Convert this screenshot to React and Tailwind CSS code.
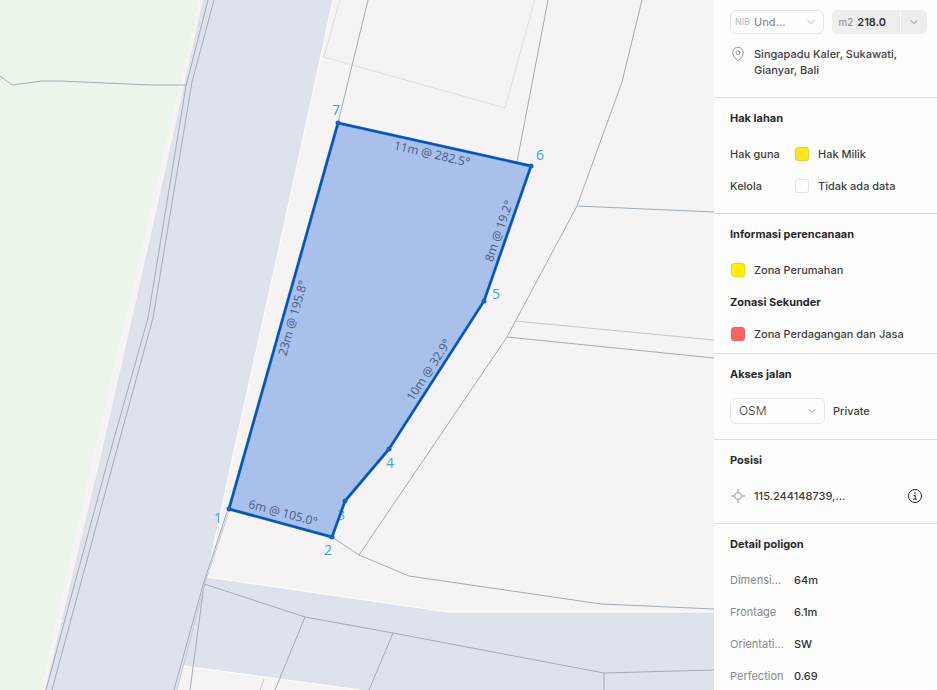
import { useState } from "react";
import { ChevronDown, MapPin } from "lucide-react";

const PARCEL = "229,509 332,537 345,501 389,449 484,301 531,166 338,123";

const VERTICES = [
  { n: 1, x: 229, y: 509, lx: 218, ly: 523 },
  { n: 2, x: 332, y: 537, lx: 328, ly: 555 },
  { n: 3, x: 345, y: 501, lx: 341, ly: 520 },
  { n: 4, x: 389, y: 449, lx: 390, ly: 468 },
  { n: 5, x: 484, y: 301, lx: 496, ly: 299 },
  { n: 6, x: 531, y: 166, lx: 540, ly: 160 },
  { n: 7, x: 338, y: 123, lx: 336, ly: 115 },
];

const EDGES = [
  { text: "11m @ 282.5°", x: 432, y: 154, angle: 13 },
  { text: "8m @ 19.2°", x: 499, y: 231, angle: -71 },
  { text: "10m @ 32.9°", x: 429, y: 370, angle: -57 },
  { text: "23m @ 195.8°", x: 293, y: 318, angle: -74 },
  { text: "6m @ 105.0°", x: 283, y: 513, angle: 15 },
];

const BOUNDARIES = [
  "208,0 186,86 148,318 108,460 46,690",
  "214,0 192,82 153,318 114,460 52,690",
  "0,76 12,85 42,81 60,81 150,85 186,85",
  "368,0 338,123",
  "548,0 517,162",
  "642,0 622,82 577,206 507,337 359,555",
  "577,206 714,212",
  "507,337 714,358",
  "332,537 359,555 409,576 601,604 714,609",
  "227,512 203,585 174,690",
  "204,585 190,690",
  "204,584 305,617 393,633 604,673 714,670",
  "305,617 275,690",
  "393,633 369,690",
  "604,673 604,690",
];

function ParcelMap() {
  return (
    <svg
      viewBox="0 0 714 690"
      preserveAspectRatio="xMidYMid slice"
      className="block h-full w-full bg-[#f5f3f4]"
      role="img"
      aria-label="Parcel map"
    >
      {/* field on the left */}
      <polygon points="0,0 199,0 146,230 92,460 41,690 0,690" fill="#ecf5ea" />

      {/* roads */}
      <polygon
        points="203,0 333,0 283,230 232,460 207,577 448,612 714,612 714,690 360,690 184,666 177,690 45,690 100,460 152,230"
        fill="#dee2eb"
      />
      <polyline points="333,0 283,230 232,460 207,577 448,612 714,612" fill="none" stroke="#fff" />
      <polyline points="177,690 184,666 360,690" fill="none" stroke="#fff" />

      {/* building */}
      <polygon points="340,-1 324,57 505,108 535,-1" fill="#f3f3f3" stroke="#d9d7cf" strokeWidth="0.8" />

      <g fill="none" stroke="#a3acb6" strokeWidth="1">
        {BOUNDARIES.map((points) => (
          <polyline key={points} points={points} />
        ))}
      </g>
      <g fill="none" stroke="#c2c9cf" strokeWidth="1">
        <polyline points="515,321 714,340" />
        <polyline points="228,514 205,583 177,690" />
        <polyline points="264,679 260,690" />
      </g>

      {/* selected parcel */}
      <polygon points={PARCEL} fill="#a8c0ea" />
      <g className="font-['Open_Sans',sans-serif] text-[14px]" fill="#3fa5d3" textAnchor="middle">
        {VERTICES.map((v) => (
          <text key={v.n} x={v.lx} y={v.ly}>
            {v.n}
          </text>
        ))}
      </g>
      <polygon points={PARCEL} fill="none" stroke="#2f86e0" strokeWidth="3" strokeLinejoin="round" />
      <polygon points={PARCEL} fill="none" stroke="#0b50ae" strokeWidth="2" strokeLinejoin="round" />
      {VERTICES.map((v) => (
        <circle key={v.n} cx={v.x} cy={v.y} r="2.5" fill="#1763bf" />
      ))}
      <g className="font-['Open_Sans',sans-serif] text-[12px]" fill="#475b84" textAnchor="middle">
        {EDGES.map((e) => (
          <text key={e.text} transform={`translate(${e.x} ${e.y}) rotate(${e.angle})`} dy="4">
            {e.text}
          </text>
        ))}
      </g>
    </svg>
  );
}

function Section({ title, className = "", children }) {
  return (
    <section className={`border-b border-[#dfdfe2] px-4 pt-3 ${className}`}>
      <h2 className="mb-4 font-bold text-[#2a2a2a]">{title}</h2>
      {children}
    </section>
  );
}

function Swatch({ color }) {
  return (
    <span className="flex w-4 shrink-0 justify-center">
      <span className={`size-3.5 rounded-[3px] border ${color}`} />
    </span>
  );
}

function LegendRow({ label, color, children }) {
  return (
    <div className="flex h-6 items-center">
      {label && <span className="w-16 shrink-0">{label}</span>}
      <Swatch color={color} />
      <span className="ml-2 whitespace-nowrap">{children}</span>
    </div>
  );
}

function LocateIcon() {
  return (
    <svg viewBox="0 0 16 16" className="size-4 shrink-0" fill="none" stroke="#999" strokeWidth="1">
      <circle cx="8" cy="8" r="3.5" />
      <path d="M8 1v3.5M8 11.5V15M1 8h3.5M11.5 8H15" />
    </svg>
  );
}

function InfoIcon() {
  return (
    <svg viewBox="0 0 16 16" className="size-4" fill="none" stroke="#222" strokeWidth="1">
      <circle cx="8" cy="8" r="6.5" />
      <path d="M6.6 7.5h1.6v3.5M6.3 11.2h3.6" />
      <circle cx="8" cy="5" r="0.8" fill="#222" stroke="none" />
    </svg>
  );
}

const DETAILS = [
  ["Dimensi...", "64m"],
  ["Frontage", "6.1m"],
  ["Orientati...", "SW"],
  ["Perfection", "0.69"],
];

export default function App() {
  const [area, setArea] = useState("218.0");

  return (
    <div className="flex h-screen overflow-hidden bg-white font-['Inter',sans-serif] text-[11px] leading-4 font-medium text-[#404040]">
      <main className="min-w-0 flex-1">
        <ParcelMap />
      </main>

      <aside className="w-[223px] shrink-0 overflow-hidden bg-[#fdfdfd]">
        <div className="border-b border-[#dfdfe2] pt-2.5 pr-2.5 pb-[19px] pl-4">
          <div className="flex gap-2">
            <div className="relative flex h-6 min-w-0 flex-1 items-center rounded-md border border-[#e6e6e6] pl-1">
              <label htmlFor="nib" className="text-[9px] font-normal text-[#bbb]">
                NIB
              </label>
              <select
                id="nib"
                className="h-full min-w-0 flex-1 appearance-none pl-1 text-[#909090] outline-none"
              >
                <option>Und...</option>
              </select>
              <ChevronDown className="pointer-events-none absolute right-1.5 size-3 text-[#aaa]" strokeWidth={1.75} />
            </div>
            <div className="flex h-6 min-w-0 flex-1 items-center overflow-hidden rounded-md border border-[#ececec] bg-[#eeeeee] pl-1.5">
              <label htmlFor="area" className="text-[10px] font-normal text-[#888]">
                m2
              </label>
              <input
                id="area"
                type="text"
                value={area}
                onChange={(e) => setArea(e.target.value)}
                className="h-full min-w-0 flex-1 pl-1 font-semibold text-[#333] outline-none"
              />
              <button
                aria-label="Area options"
                className="flex h-full w-[26px] shrink-0 items-center justify-center border-l border-white"
              >
                <ChevronDown className="size-3 text-[#777]" strokeWidth={1.75} />
              </button>
            </div>
          </div>
          <div className="mt-3 flex gap-2">
            <MapPin className="size-4 shrink-0 text-[#888]" strokeWidth={1.25} />
            <p>
              Singapadu Kaler, Sukawati,
              <br />
              Gianyar, Bali
            </p>
          </div>
        </div>

        <Section title="Hak lahan" className="pb-[15px]">
          <div className="flex flex-col gap-2">
            <LegendRow label="Hak guna" color="border-[#e3cf2a] bg-[#fae61e]">
              Hak Milik
            </LegendRow>
            <LegendRow label="Kelola" color="border-[#e2e2e2] bg-white">
              Tidak ada data
            </LegendRow>
          </div>
        </Section>

        <Section title="Informasi perencanaan" className="pb-[7px]">
          <LegendRow color="border-[#e6d800] bg-[#fff000]">Zona Perumahan</LegendRow>
          <h3 className="my-3 font-bold text-[#2a2a2a]">Zonasi Sekunder</h3>
          <LegendRow color="border-[#ea6060] bg-[#fd6565]">Zona Perdagangan dan Jasa</LegendRow>
        </Section>

        <Section title="Akses jalan" className="pb-[15px]">
          <div className="flex items-center gap-2">
            <div className="relative flex h-[26px] w-[95px] items-center rounded-md border border-[#e6e6e6]">
              <select
                aria-label="Akses jalan"
                className="h-full w-full appearance-none pl-2 text-[12px] font-light text-[#333] outline-none"
              >
                <option>OSM</option>
              </select>
              <ChevronDown className="pointer-events-none absolute right-1.5 size-3 text-[#888]" strokeWidth={1.75} />
            </div>
            <span>Private</span>
          </div>
        </Section>

        <Section title="Posisi" className="pb-[15px]">
          <div className="flex h-6 items-center gap-2">
            <LocateIcon />
            <span className="flex-1">115.244148739,...</span>
            <button aria-label="Info posisi" className="-mr-0.5">
              <InfoIcon />
            </button>
          </div>
        </Section>

        <section className="px-4 pt-3">
          <h2 className="mb-4 font-bold text-[#2a2a2a]">Detail poligon</h2>
          <dl className="flex flex-col gap-2">
            {DETAILS.map(([label, value]) => (
              <div key={label} className="flex h-6 items-center">
                <dt className="w-16 shrink-0 font-normal text-[#888]">{label}</dt>
                <dd className="text-[#333]">{value}</dd>
              </div>
            ))}
          </dl>
        </section>
      </aside>
    </div>
  );
}
